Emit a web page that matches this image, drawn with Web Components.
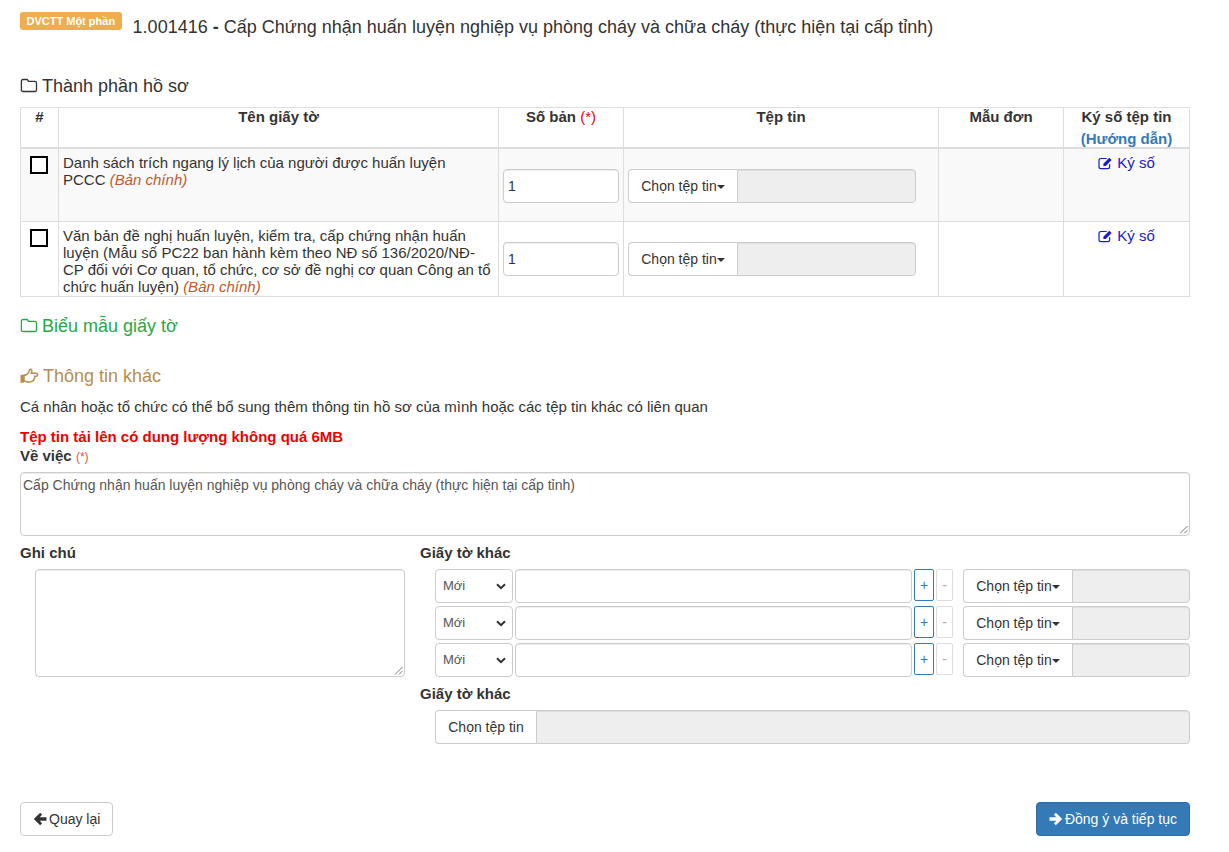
<!DOCTYPE html>
<html lang="vi">
<head>
<meta charset="utf-8">
<title>Thành phần hồ sơ</title>
<style>
    html, body { margin: 0; background: #fff; }
    body { font: 14px/20px "Liberation Sans", Arial, sans-serif; color: #333; }
</style>
</head>
<body>
<dvc-page></dvc-page>

<script>
const ICONS = {
    folder: '<svg viewBox="0 0 18 16" width="18" height="16" fill="none" stroke="currentColor" stroke-width="1.3"><path d="M3 1.500h3.600c.9 0 1.200.4 1.500 1l.4.800h6.400c1 0 1.600.6 1.600 1.600v7c0 1-.6 1.600-1.600 1.600H3c-1 0-1.600-.6-1.600-1.600V3.100C1.400 2.100 2 1.500 3 1.500z"/></svg>',
    hand: '<svg viewBox="0 0 19 16" width="19" height="16" fill="none" stroke="currentColor"><path stroke-width="3.400" d="M2.200 6.800v8"/><path stroke-width="1.500" d="M4 7.300c2 0 3.800-1.700 4.600-3 .5-.9.600-3 1.700-3 1.400 0 1.900 1.300 1.300 3l-.4 1h4.900c1 0 1.600.7 1.600 1.500s-.7 1.500-1.600 1.500h-1.300c.4 1.400-.1 2.300-.9 2.700.1 1.300-.7 2-1.600 2.100-.5.600-1.100.8-2 .8H8c-1.500 0-2.600-.9-4-.9z"/></svg>',
    edit: '<svg viewBox="0 0 15 14" width="15" height="14"><path fill="none" stroke="currentColor" stroke-width="1.200" d="M11.600 8.200v2.600c0 1.200-.7 1.900-1.900 1.900H2.900c-1.200 0-1.900-.7-1.900-1.900V4.400c0-1.200.7-1.900 1.900-1.900h5.800"/><path fill="currentColor" d="M5.400 7.700 11.300 1.800l2.300 2.300-5.900 5.900H5.400z"/></svg>',
    left: '<svg viewBox="0 0 14 14" width="14" height="14" fill="currentColor"><path d="M7.200.8 9.100 2.700 6.700 5.200h6.800v3.600H6.700l2.400 2.500-1.900 1.900L.8 7z"/></svg>',
    right: '<svg viewBox="0 0 14 14" width="14" height="14" fill="currentColor"><path d="M6.800.8 4.900 2.700l2.400 2.500H.5v3.600h6.800l-2.400 2.500 1.900 1.900L13.200 7z"/></svg>'
};

class DvcTitle extends HTMLElement {
    connectedCallback() {
        this.attachShadow({ mode: 'open' });
        this.shadowRoot.innerHTML = `
            <style>
                :host { display: flex; align-items: flex-start; padding-top: 12px; height: 48px; box-sizing: border-box; }
                .badge {
                    background: #f0ad4e; color: #fff; font-size: 11px; font-weight: bold; line-height: 18px;
                    height: 18px; padding: 0 6.500px; border-radius: 3px; white-space: nowrap;
                }
                .text { margin-left: 11px; font-size: 18px; line-height: 30px; color: #333; }
            </style>
            <span class="badge"><slot name="badge"></slot></span>
            <span class="text"><slot></slot></span>
        `;
    }
}

class DvcHeading extends HTMLElement {
    connectedCallback() {
        const icon = ICONS[this.getAttribute('icon')] || '';
        this.attachShadow({ mode: 'open' });
        this.shadowRoot.innerHTML = `
            <style>
                :host { display: flex; align-items: center; gap: 4px; font-size: 18px; line-height: 22px; }
                svg { display: block; }
            </style>
            ${icon}<slot></slot>
        `;
    }
}

class DvcPicker extends HTMLElement {
    connectedCallback() {
        this.attachShadow({ mode: 'open' });
        this.shadowRoot.innerHTML = `
            <style>
                :host { display: flex; height: 34px; box-sizing: border-box; font-size: 14px; line-height: 20px; color: #555; }
                .btn {
                    width: var(--btn-width, 109px); box-sizing: border-box; flex: none; display: flex;
                    align-items: center; justify-content: center; background: #fff; color: #333;
                    border: 1px solid #ccc; border-right: 0; border-radius: 4px 0 0 4px; white-space: nowrap;
                }
                .caret {
                    width: 0; height: 0; margin-top: 2px;
                    border-top: 4px solid #333; border-left: 4px solid transparent; border-right: 4px solid transparent;
                }
                .box {
                    flex: 1; background: #eee; border: 1px solid #ccc; border-radius: 0 4px 4px 0;
                    box-shadow: inset 0 1px 1px rgba(0,0,0,.075);
                }
            </style>
            <div class="btn"><slot></slot>${this.hasAttribute('caret') ? '<span class="caret"></span>' : ''}</div>
            <div class="box"></div>
        `;
    }
}

class DvcDocHead extends HTMLElement {
    connectedCallback() {
        this.attachShadow({ mode: 'open' });
        this.shadowRoot.innerHTML = `
            <style>
                :host {
                    display: grid; grid-template-columns: 37px 440px 125px 315px 125px 126px;
                    height: 41px; box-sizing: border-box; border-bottom: 2px solid #ddd;
                    font-size: 15px; font-weight: bold; line-height: 18px; text-align: center;
                }
                div { padding: 0 4px; box-sizing: border-box; }
                div + div { border-left: 1px solid #ddd; }
                .req { color: #e00; font-weight: normal; }
                a { display: block; margin-top: 4px; color: #337ab7; text-decoration: none; }
            </style>
            <div>#</div>
            <div>Tên giấy tờ</div>
            <div>Số bản <span class="req">(*)</span></div>
            <div>Tệp tin</div>
            <div>Mẫu đơn</div>
            <div>Ký số tệp tin<a href="#">(Hướng dẫn)</a></div>
        `;
    }
}

class DvcDocRow extends HTMLElement {
    connectedCallback() {
        this.attachShadow({ mode: 'open' });
        this.shadowRoot.innerHTML = `
            <style>
                :host {
                    display: grid; grid-template-columns: 37px 440px 125px 315px 125px 126px;
                    border-bottom: 1px solid #ddd; font-size: 15px; line-height: 17px;
                }
                :host([striped]) { background: #f9f9f9; }
                .cell { box-sizing: border-box; padding: 5px 4px 1px; }
                .cell + .cell { border-left: 1px solid #ddd; }
                .check { padding: 7px 0 0 9px; }
                .check i { display: block; width: 18px; height: 18px; box-sizing: border-box; border: 2px solid #000; background: #fff; }
                .count, .file { padding-top: 20px; padding-bottom: 18px; }
                .count input {
                    display: block; width: 116px; height: 34px; box-sizing: border-box; padding: 0 4px;
                    font: 14px "Liberation Sans", Arial, sans-serif; color: #333; background: #fff; border: 1px solid #ccc; border-radius: 4px;
                    box-shadow: inset 0 1px 1px rgba(0,0,0,.075);
                }
                .file dvc-picker { width: 288px; }
                .sign { text-align: center; }
                .sign a { display: inline-flex; align-items: center; gap: 4px; color: #1a1acc; text-decoration: none; }
                ::slotted(em) { color: #c2592f; }
            </style>
            <div class="cell check"><i></i></div>
            <div class="cell name"><slot></slot></div>
            <div class="cell count"><input value="1"></div>
            <div class="cell file"><dvc-picker caret>Chọn tệp tin</dvc-picker></div>
            <div class="cell"></div>
            <div class="cell sign"><a href="#">${ICONS.edit}Ký số</a></div>
        `;
    }
}

class DvcDocTable extends HTMLElement {
    connectedCallback() {
        this.attachShadow({ mode: 'open' });
        this.shadowRoot.innerHTML = `
            <style>
                :host { display: block; box-sizing: border-box; border: 1px solid #ddd; border-bottom: 0; }
            </style>
            <slot></slot>
        `;
    }
}

class DvcOtherRow extends HTMLElement {
    connectedCallback() {
        this.attachShadow({ mode: 'open' });
        this.shadowRoot.innerHTML = `
            <style>
                :host { display: flex; align-items: flex-start; height: 34px; font-size: 14px; }
                .sel {
                    width: 78px; height: 34px; box-sizing: border-box; flex: none; display: flex; align-items: center;
                    justify-content: space-between; padding: 0 6px 0 7px; font-size: 13px; color: #555;
                    border: 1px solid #ccc; border-radius: 4px; background: #fff;
                }
                .input {
                    flex: none; width: 397px; height: 34px; box-sizing: border-box; margin-left: 2px;
                    border: 1px solid #ccc; border-radius: 4px; box-shadow: inset 0 1px 1px rgba(0,0,0,.075);
                }
                .plus, .minus {
                    flex: none; height: 32px; box-sizing: border-box; display: flex; align-items: center;
                    justify-content: center; font-size: 14px;
                }
                .plus { width: 20px; margin-left: 2px; color: #337ab7; border: 1px solid #337ab7; border-radius: 2px; }
                .minus { width: 17px; margin-left: 2px; color: #aaa; border: 1px solid #ddd; border-radius: 2px; }
                dvc-picker { margin-left: 10px; width: 227px; }
                svg { display: block; }
            </style>
            <div class="sel">Mới
                <svg viewBox="0 0 10 7" width="10" height="7" fill="none" stroke="#333" stroke-width="2"><path d="M1 1.200 5 5.200 9 1.200"/></svg>
            </div>
            <div class="input"></div>
            <div class="plus">+</div>
            <div class="minus">-</div>
            <dvc-picker caret>Chọn tệp tin</dvc-picker>
        `;
    }
}

class DvcButton extends HTMLElement {
    connectedCallback() {
        const icon = ICONS[this.getAttribute('icon')] || '';
        this.attachShadow({ mode: 'open' });
        this.shadowRoot.innerHTML = `
            <style>
                :host {
                    display: inline-flex; align-items: center; gap: 2px; height: 34px; box-sizing: border-box; padding: 0 12px;
                    border: 1px solid #ccc; border-radius: 4px; background: #fff; color: #333; white-space: nowrap;
                }
                :host([primary]) { background: #337ab7; border-color: #2e6da4; color: #fff; }
                svg { display: block; }
            </style>
            ${icon}<slot></slot>
        `;
    }
}

class DvcPage extends HTMLElement {
    connectedCallback() {
        this.attachShadow({ mode: 'open' });
        this.shadowRoot.innerHTML = `
            <style>
                :host { display: block; width: 1170px; margin-left: 20px; }
                .first { margin-top: 27px; color: #333; }
                dvc-doc-table { display: block; margin-top: 10px; }
                .green { margin-top: 18px; color: #28a745; }
                .gold { margin-top: 28px; color: #b58e4e; }
                p { margin: 10px 0 0; font-size: 15px; line-height: 20px; }
                .warn { margin-top: 11px; color: #e00; font-size: 15px; font-weight: bold; line-height: 18px; }
                label { display: block; font-size: 15px; font-weight: bold; line-height: 18px; color: #333; }
                .req { color: #d9534f; font-weight: normal; font-size: 12px; }
                .subject { margin-top: 1px; }
                .area {
                    box-sizing: border-box; border: 1px solid #ccc; border-radius: 4px; padding: 3px 2px;
                    box-shadow: inset 0 1px 1px rgba(0,0,0,.075); font-size: 14px; line-height: 18px; color: #555;
                    overflow: hidden; position: relative;
                }
                .area svg { position: absolute; right: 1px; bottom: 1px; }
                .subject-area { height: 64px; margin-top: 6px; }
                .cols { display: grid; grid-template-columns: 385px 770px; gap: 15px; margin-top: 8px; }
                .note { height: 108px; margin: 7px 0 0 15px; }
                .stack { display: grid; gap: 3px; margin: 7px 0 0 15px; }
                .single { margin: 7px 0 0 15px; --btn-width: 101px; }
                .second { margin-top: 8px; }
                .actions { display: flex; justify-content: space-between; margin-top: 58px; }
            </style>
            <dvc-title>
                <span slot="badge">DVCTT Một phần</span>
                1.001416 <b>-</b> Cấp Chứng nhận huấn luyện nghiệp vụ phòng cháy và chữa cháy (thực hiện tại cấp tỉnh)
            </dvc-title>

            <dvc-heading class="first" icon="folder">Thành phần hồ sơ</dvc-heading>
            <dvc-doc-table>
                <dvc-doc-head></dvc-doc-head>
                <dvc-doc-row striped>Danh sách trích ngang lý lịch của người được huấn luyện<br>PCCC <em>(Bản chính)</em></dvc-doc-row>
                <dvc-doc-row>Văn bản đề nghị huấn luyện, kiểm tra, cấp chứng nhận huấn luyện (Mẫu số PC22 ban hành kèm theo NĐ số 136/2020/NĐ-CP đối với Cơ quan, tổ chức, cơ sở đề nghị cơ quan Công an tổ chức huấn luyện) <em>(Bản chính)</em></dvc-doc-row>
            </dvc-doc-table>

            <dvc-heading class="green" icon="folder">Biểu mẫu giấy tờ</dvc-heading>
            <dvc-heading class="gold" icon="hand">Thông tin khác</dvc-heading>
            <p>Cá nhân hoặc tổ chức có thể bổ sung thêm thông tin hồ sơ của mình hoặc các tệp tin khác có liên quan</p>
            <div class="warn">Tệp tin tải lên có dung lượng không quá 6MB</div>
            <label class="subject">Về việc <span class="req">(*)</span></label>
            <div class="area subject-area">Cấp Chứng nhận huấn luyện nghiệp vụ phòng cháy và chữa cháy (thực hiện tại cấp tỉnh)
                <svg viewBox="0 0 10 10" width="10" height="10" stroke="#777" fill="none"><path d="M2 9.500 9.500 2M6 9.500 9.500 6"/></svg>
            </div>

            <div class="cols">
                <div>
                    <label>Ghi chú</label>
                    <div class="area note"><svg viewBox="0 0 10 10" width="10" height="10" stroke="#777" fill="none"><path d="M2 9.500 9.500 2M6 9.500 9.500 6"/></svg></div>
                </div>
                <div>
                    <label>Giấy tờ khác</label>
                    <div class="stack">
                        <dvc-other-row></dvc-other-row>
                        <dvc-other-row></dvc-other-row>
                        <dvc-other-row></dvc-other-row>
                    </div>
                    <label class="second">Giấy tờ khác</label>
                    <dvc-picker class="single">Chọn tệp tin</dvc-picker>
                </div>
            </div>

            <div class="actions">
                <dvc-button icon="left">Quay lại</dvc-button>
                <dvc-button icon="right" primary>Đồng ý và tiếp tục</dvc-button>
            </div>
        `;
    }
}

customElements.define('dvc-title', DvcTitle);
customElements.define('dvc-heading', DvcHeading);
customElements.define('dvc-picker', DvcPicker);
customElements.define('dvc-doc-head', DvcDocHead);
customElements.define('dvc-doc-row', DvcDocRow);
customElements.define('dvc-doc-table', DvcDocTable);
customElements.define('dvc-other-row', DvcOtherRow);
customElements.define('dvc-button', DvcButton);
customElements.define('dvc-page', DvcPage);
</script>
</body>
</html>
